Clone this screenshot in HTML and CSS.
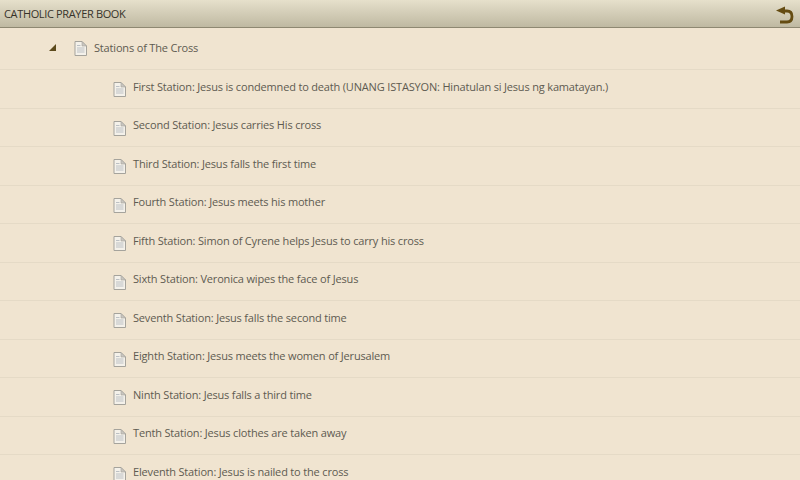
FILE: index.html
```html
<!DOCTYPE html>
<html>
<head>
  <title>Catholic Prayer Book</title>
  <link rel="stylesheet" href="styles.css">
</head>
<body>
  <svg class="icon-defs" width="0" height="0">
    <symbol id="page" viewBox="0 0 13 15">
      <path d="M1 .5H8L12.5 5V14.5H1Z" fill="#f4f1ea" stroke="#a5a39c"/>
      <path d="M8 .5V5H12.5Z" fill="#c9c7c0" stroke="#a5a39c" stroke-width=".6"/>
      <path d="M3 4.5H6.5M3 7H10.5M3 9H10.5M3 11H10.5" stroke="#bcc0c4" fill="none"/>
    </symbol>
  </svg>

  <header class="title-bar">
    <h1 class="header-title">CATHOLIC PRAYER BOOK</h1>
    <a href="#" class="back-button">
      <svg width="18" height="20" viewBox="0 0 18 20">
        <path d="M8 7H11C15 7 16 9 16 12.5C16 16 14 18 11 18H4" fill="none" stroke="#654c12" stroke-width="2.8"/>
        <path d="M0 6.5L9 2.5V10.5Z" fill="#654c12"/>
      </svg>
    </a>
  </header>

  <ul class="tree">
    <li class="row row-parent">
      <span class="arrow"></span>
      <svg class="page-icon"><use href="#page"/></svg>
      <span class="label">Stations of The Cross</span>
    </li>
    <li class="row"><svg class="page-icon"><use href="#page"/></svg><span class="label">First Station: Jesus is condemned to death (UNANG ISTASYON: Hinatulan si Jesus ng kamatayan.)</span></li>
    <li class="row"><svg class="page-icon"><use href="#page"/></svg><span class="label">Second Station: Jesus carries His cross</span></li>
    <li class="row"><svg class="page-icon"><use href="#page"/></svg><span class="label">Third Station: Jesus falls the first time</span></li>
    <li class="row"><svg class="page-icon"><use href="#page"/></svg><span class="label">Fourth Station: Jesus meets his mother</span></li>
    <li class="row"><svg class="page-icon"><use href="#page"/></svg><span class="label">Fifth Station: Simon of Cyrene helps Jesus to carry his cross</span></li>
    <li class="row"><svg class="page-icon"><use href="#page"/></svg><span class="label">Sixth Station: Veronica wipes the face of Jesus</span></li>
    <li class="row"><svg class="page-icon"><use href="#page"/></svg><span class="label">Seventh Station: Jesus falls the second time</span></li>
    <li class="row"><svg class="page-icon"><use href="#page"/></svg><span class="label">Eighth Station: Jesus meets the women of Jerusalem</span></li>
    <li class="row"><svg class="page-icon"><use href="#page"/></svg><span class="label">Ninth Station: Jesus falls a third time</span></li>
    <li class="row"><svg class="page-icon"><use href="#page"/></svg><span class="label">Tenth Station: Jesus clothes are taken away</span></li>
    <li class="row"><svg class="page-icon"><use href="#page"/></svg><span class="label">Eleventh Station: Jesus is nailed to the cross</span></li>
  </ul>
</body>
</html>
```

FILE: styles.css
```css
html, body {
  height: 100%;
}

body {
  font-family: "Open Sans", "Noto Sans", sans-serif;
  margin: 0;
  padding: 0;
  background-color: #f0e4d0;
  color: #5e5b50;
  overflow: hidden;
}

.icon-defs {
  display: block;
  height: 0;
}

.title-bar {
  height: 27px;
  display: flex;
  justify-content: space-between;
  align-items: center;
  padding: 0 6px 0 4px;
  background: linear-gradient(to bottom, #e6e0cb, #bfb9a2);
  border-bottom: 1px solid #8e8872;
  box-sizing: content-box;
}

.header-title {
  margin: 0;
  font-size: 11px;
  font-weight: 400;
  letter-spacing: -0.35px;
  color: #37332a;
}

.back-button {
  display: flex;
}

.tree {
  list-style: none;
  margin: 0;
  padding: 0;
}

.row {
  height: 38.5px;
  box-sizing: border-box;
  display: flex;
  align-items: center;
  gap: 7px;
  padding-left: 113px;
  font-size: 11px;
  letter-spacing: -0.17px;
  border-bottom: 1px solid #e5dac6;
}

.row-parent {
  height: 42px;
  padding-left: 49px;
  padding-bottom: 2px;
}

.label {
  margin-bottom: 5px;
}

.row-parent .label {
  margin-bottom: 0;
}

.arrow {
  width: 0;
  height: 0;
  margin-right: 11px;
  border-style: solid;
  border-width: 0 0 7px 7px;
  border-color: transparent transparent #5c4a1c transparent;
}

.page-icon {
  width: 13px;
  height: 15px;
  flex: none;
  margin-top: 2px;
}
```
